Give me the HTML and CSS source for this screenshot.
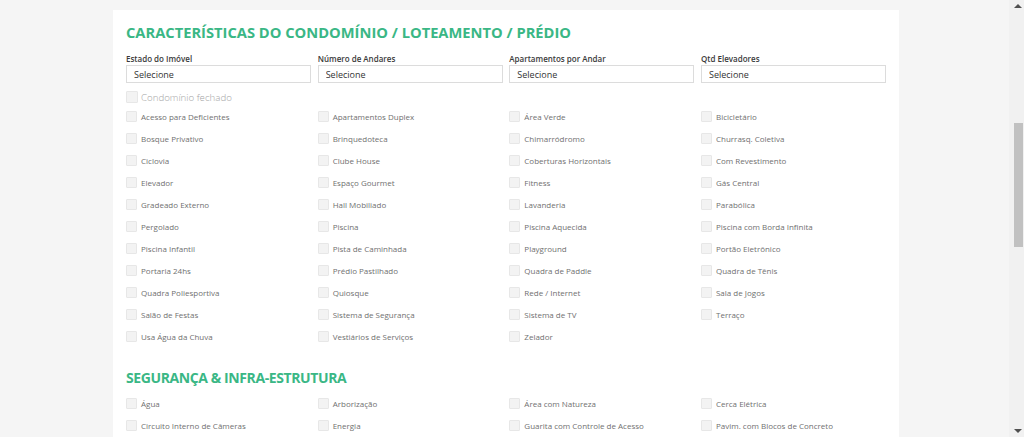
FILE: index.html
```html
<!DOCTYPE html>
<html lang="pt-BR">
<head>
<meta charset="utf-8">
<title>Características do Condomínio</title>
<link rel="stylesheet" href="styles.css">
</head>
<body>
<main class="card">
  <h2 class="section-title">CARACTERÍSTICAS DO CONDOMÍNIO / LOTEAMENTO / PRÉDIO</h2>
  <div class="grid selects">
    <label class="field"><span class="field-label">Estado do Imóvel</span><select class="select"><option>Selecione</option></select></label>
    <label class="field"><span class="field-label">Número de Andares</span><select class="select"><option>Selecione</option></select></label>
    <label class="field"><span class="field-label">Apartamentos por Andar</span><select class="select"><option>Selecione</option></select></label>
    <label class="field"><span class="field-label">Qtd Elevadores</span><select class="select"><option>Selecione</option></select></label>
  </div>
  <label class="check big"><input type="checkbox" class="box"><span>Condomínio fechado</span></label>
  <div class="grid checks">
    <label class="check"><input type="checkbox" class="box"><span>Acesso para Deficientes</span></label>
    <label class="check"><input type="checkbox" class="box"><span>Apartamentos Duplex</span></label>
    <label class="check"><input type="checkbox" class="box"><span>Área Verde</span></label>
    <label class="check"><input type="checkbox" class="box"><span>Bicicletário</span></label>
    <label class="check"><input type="checkbox" class="box"><span>Bosque Privativo</span></label>
    <label class="check"><input type="checkbox" class="box"><span>Brinquedoteca</span></label>
    <label class="check"><input type="checkbox" class="box"><span>Chimarródromo</span></label>
    <label class="check"><input type="checkbox" class="box"><span>Churrasq. Coletiva</span></label>
    <label class="check"><input type="checkbox" class="box"><span>Ciclovia</span></label>
    <label class="check"><input type="checkbox" class="box"><span>Clube House</span></label>
    <label class="check"><input type="checkbox" class="box"><span>Coberturas Horizontais</span></label>
    <label class="check"><input type="checkbox" class="box"><span>Com Revestimento</span></label>
    <label class="check"><input type="checkbox" class="box"><span>Elevador</span></label>
    <label class="check"><input type="checkbox" class="box"><span>Espaço Gourmet</span></label>
    <label class="check"><input type="checkbox" class="box"><span>Fitness</span></label>
    <label class="check"><input type="checkbox" class="box"><span>Gás Central</span></label>
    <label class="check"><input type="checkbox" class="box"><span>Gradeado Externo</span></label>
    <label class="check"><input type="checkbox" class="box"><span>Hall Mobiliado</span></label>
    <label class="check"><input type="checkbox" class="box"><span>Lavanderia</span></label>
    <label class="check"><input type="checkbox" class="box"><span>Parabólica</span></label>
    <label class="check"><input type="checkbox" class="box"><span>Pergolado</span></label>
    <label class="check"><input type="checkbox" class="box"><span>Piscina</span></label>
    <label class="check"><input type="checkbox" class="box"><span>Piscina Aquecida</span></label>
    <label class="check"><input type="checkbox" class="box"><span>Piscina com Borda Infinita</span></label>
    <label class="check"><input type="checkbox" class="box"><span>Piscina Infantil</span></label>
    <label class="check"><input type="checkbox" class="box"><span>Pista de Caminhada</span></label>
    <label class="check"><input type="checkbox" class="box"><span>Playground</span></label>
    <label class="check"><input type="checkbox" class="box"><span>Portão Eletrônico</span></label>
    <label class="check"><input type="checkbox" class="box"><span>Portaria 24hs</span></label>
    <label class="check"><input type="checkbox" class="box"><span>Prédio Pastilhado</span></label>
    <label class="check"><input type="checkbox" class="box"><span>Quadra de Paddle</span></label>
    <label class="check"><input type="checkbox" class="box"><span>Quadra de Tênis</span></label>
    <label class="check"><input type="checkbox" class="box"><span>Quadra Poliesportiva</span></label>
    <label class="check"><input type="checkbox" class="box"><span>Quiosque</span></label>
    <label class="check"><input type="checkbox" class="box"><span>Rede / Internet</span></label>
    <label class="check"><input type="checkbox" class="box"><span>Sala de Jogos</span></label>
    <label class="check"><input type="checkbox" class="box"><span>Salão de Festas</span></label>
    <label class="check"><input type="checkbox" class="box"><span>Sistema de Segurança</span></label>
    <label class="check"><input type="checkbox" class="box"><span>Sistema de TV</span></label>
    <label class="check"><input type="checkbox" class="box"><span>Terraço</span></label>
    <label class="check"><input type="checkbox" class="box"><span>Usa Água da Chuva</span></label>
    <label class="check"><input type="checkbox" class="box"><span>Vestiários de Serviços</span></label>
    <label class="check"><input type="checkbox" class="box"><span>Zelador</span></label>
  </div>
  <h2 class="section-title second">SEGURANÇA &amp; INFRA-ESTRUTURA</h2>
  <div class="grid checks">
    <label class="check"><input type="checkbox" class="box"><span>Água</span></label>
    <label class="check"><input type="checkbox" class="box"><span>Arborização</span></label>
    <label class="check"><input type="checkbox" class="box"><span>Área com Natureza</span></label>
    <label class="check"><input type="checkbox" class="box"><span>Cerca Elétrica</span></label>
    <label class="check"><input type="checkbox" class="box"><span>Circuito Interno de Câmeras</span></label>
    <label class="check"><input type="checkbox" class="box"><span>Energia</span></label>
    <label class="check"><input type="checkbox" class="box"><span>Guarita com Controle de Acesso</span></label>
    <label class="check"><input type="checkbox" class="box"><span>Pavim. com Blocos de Concreto</span></label>
  </div>
</main>
<div class="scrollbar" aria-hidden="true">
  <span class="arrow up"></span>
  <span class="thumb"></span>
  <span class="arrow down"></span>
</div>
</body>
</html>
```

FILE: styles.css
```css
html, body {
  margin: 0;
  padding: 0;
  height: 437px;
  overflow: hidden;
}

body {
  background: #f5f5f5;
  font-family: "Open Sans", "Liberation Sans", sans-serif;
  color: #333;
}

.card {
  box-sizing: border-box;
  width: 786px;
  margin: 10px 0 0 113px;
  padding: 13px 13px 40px;
  background: #fff;
  min-height: 600px;
}

.section-title {
  margin: 0;
  font-size: 14.7px;
  line-height: 18px;
  font-weight: 700;
  color: #3ab785;
}

.section-title.second {
  margin-top: 22px;
  margin-bottom: 5px;
  font-size: 14px;
  letter-spacing: -0.4px;
}

.grid {
  display: grid;
  grid-template-columns: repeat(4, 1fr);
  column-gap: 6.67px;
}

.selects {
  margin-top: 12px;
}

.field {
  display: flex;
  flex-direction: column;
}

.field-label {
  font-size: 8px;
  line-height: 10px;
  font-weight: 600;
  color: #3a3a3a;
  margin: 1px 0 1px;
}

.select {
  appearance: none;
  -webkit-appearance: none;
  box-sizing: border-box;
  width: 100%;
  height: 18px;
  margin: 0;
  padding: 0 7px;
  border: 1px solid #dcdcdc;
  border-radius: 0;
  background: #fff;
  font-family: "Open Sans", "Liberation Sans", sans-serif;
  font-size: 9px;
  color: #333;
}

.check {
  display: flex;
  align-items: center;
  gap: 4px;
  height: 22px;
  font-size: 8px;
  color: #707070;
  white-space: nowrap;
}

.check.big {
  height: 12px;
  margin: 8px 0 2px;
  gap: 3px;
  font-size: 9.7px;
  font-weight: 300;
  color: #a5a5a5;
}

.box {
  appearance: none;
  -webkit-appearance: none;
  box-sizing: border-box;
  flex: none;
  width: 11px;
  height: 11px;
  margin: 0;
  border: 1px solid #e7e7e7;
  border-radius: 1px;
  background: #f3f3f3;
}

.check.big .box {
  width: 12px;
  height: 12px;
}

.scrollbar {
  position: fixed;
  top: 0;
  right: 0;
  width: 15px;
  height: 437px;
  background: #f1f1f1;
}

.thumb {
  position: absolute;
  top: 123px;
  left: 5px;
  width: 9px;
  height: 124px;
  background: #c1c1c1;
}

.arrow {
  position: absolute;
  left: 5px;
  width: 0;
  height: 0;
  border-left: 4px solid transparent;
  border-right: 4px solid transparent;
}

.arrow.up {
  top: 4px;
  border-bottom: 4px solid #505050;
}

.arrow.down {
  bottom: 4px;
  border-top: 4px solid #505050;
}
```
